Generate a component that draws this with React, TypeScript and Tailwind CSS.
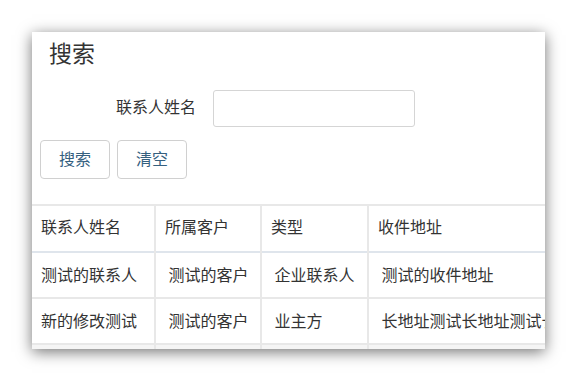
const font = "font-['Noto_Sans_CJK_SC',sans-serif]"

const columns = ['联系人姓名', '所属客户', '类型', '收件地址']

const rows = [
  ['测试的联系人', ' 测试的客户', ' 企业联系人', ' 测试的收件地址'],
  ['新的修改测试', ' 测试的客户', ' 业主方', ' 长地址测试长地址测试长地址测试'],
  ['', '', '', ''],
]

const widths = ['w-[123px]', 'w-[106px]', 'w-[107px]', 'w-[260px]']

export default function App() {
  return (
    <div className={`w-[577px] h-[382px] bg-white p-8 ${font}`}>
      <div className="w-[513px] h-[317px] bg-white overflow-hidden shadow-[0_3px_14px_rgba(0,0,0,0.55)]">
        <h1 className="pl-[17px] pt-[4px] text-[23px] leading-[32px] text-[#333]">搜索</h1>

        <div className="flex items-center mt-[22px]">
          <label className="w-[164px] mb-[6px] text-right text-[16px] text-[#333]">联系人姓名</label>
          <input
            type="text"
            className="ml-[17px] w-[202px] h-[37px] rounded-[3px] border border-[#d5d5d5] outline-none"
          />
        </div>

        <div className="flex gap-[7px] pl-2 mt-[13px]">
          <button className="w-[70px] h-[39px] pb-[3px] rounded-[4px] border border-[#d0d0d0] text-[16px] text-[#35607f] bg-white">
            搜索
          </button>
          <button className="w-[70px] h-[39px] pb-[3px] rounded-[4px] border border-[#d0d0d0] text-[16px] text-[#35607f] bg-white">
            清空
          </button>
        </div>

        <table className="mt-[25px] border-collapse table-fixed text-[16px] text-[#333] w-[596px]">
          <thead>
            <tr className="h-[47px] border-t-2 border-[#e8e8e8] border-b-2 border-b-[#dfe5ec]">
              {columns.map((c, i) => (
                <th
                  key={c}
                  className={`${widths[i]} pb-[5px] font-normal text-left pl-[9px] border-r-2 border-[#e8e8e8]`}
                >
                  {c}
                </th>
              ))}
            </tr>
          </thead>
          <tbody>
            {rows.map((r, ri) => (
              <tr
                key={ri}
                className={`h-[46px] border-b-2 border-[#e8e8e8] ${ri === 2 ? 'bg-[#f5f5f5]' : ''}`}
              >
                {r.map((cell, ci) => (
                  <td
                    key={ci}
                    className="whitespace-pre overflow-hidden pb-[2px] pl-[9px] border-r-2 border-[#e8e8e8]"
                  >
                    {cell}
                  </td>
                ))}
              </tr>
            ))}
          </tbody>
        </table>
      </div>
    </div>
  )
}
